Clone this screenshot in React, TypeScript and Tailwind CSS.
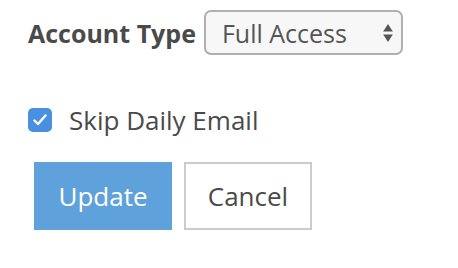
import { useState } from 'react';

export default function App() {
  const [skip, setSkip] = useState(true);
  const [type, setType] = useState('Full Access');

  return (
    <div className="min-h-[268px] bg-white pl-[28px] pt-[10px] font-['Open_Sans',sans-serif] text-[#555]">
      {/* Account type */}
      <div className="flex h-[45px] items-center gap-[8px]">
        <label className="text-[25px] font-bold leading-[36px] text-[#4a4a4a]">Account Type</label>
        <div className="relative">
          <select
            value={type}
            onChange={(e) => setType(e.target.value)}
            className="h-[45px] w-[199px] appearance-none rounded-[7px] border-2 border-[#b0b0b0] bg-[#f7f7f7] pl-[16px] text-[25px] leading-[36px] text-[#555] outline-none"
          >
            <option>Full Access</option>
            <option>Read Only</option>
          </select>
          <svg
            className="pointer-events-none absolute right-[10px] top-[13px]"
            width="10"
            height="20"
            viewBox="0 0 10 20"
          >
            <path d="M5 1 L9.8 8.5 H0.2 Z" fill="#555" />
            <path d="M5 19 L9.8 11.5 H0.2 Z" fill="#555" />
          </svg>
        </div>
      </div>

      {/* Skip email */}
      <label className="mt-[47px] flex h-[36px] items-center gap-[17px]">
        <span
          onClick={() => setSkip(!skip)}
          className={`flex h-[24px] w-[24px] items-center justify-center rounded-[5px] ${
            skip ? 'bg-[#4a90e2]' : 'border-2 border-[#aaa] bg-white'
          }`}
        >
          {skip && (
            <svg width="14" height="12" viewBox="0 0 14 12">
              <path d="M1.5 6.5 L5 10 L12.5 1.5" fill="none" stroke="#fff" strokeWidth="2.4" strokeLinecap="round" strokeLinejoin="round" />
            </svg>
          )}
        </span>
        <span className="text-[26px] leading-[36px] text-[#4a4a4a]">Skip Daily Email</span>
      </label>

      {/* Buttons */}
      <div className="mt-[24px] flex gap-[12px] pl-[6px]">
        <button className="h-[68px] w-[138px] bg-[#5fa2db] text-[26px] leading-[36px] text-white">Update</button>
        <button className="h-[68px] w-[128px] border-2 border-[#ccc] bg-white text-[26px] leading-[36px] text-[#4a4a4a]">
          Cancel
        </button>
      </div>
    </div>
  );
}
